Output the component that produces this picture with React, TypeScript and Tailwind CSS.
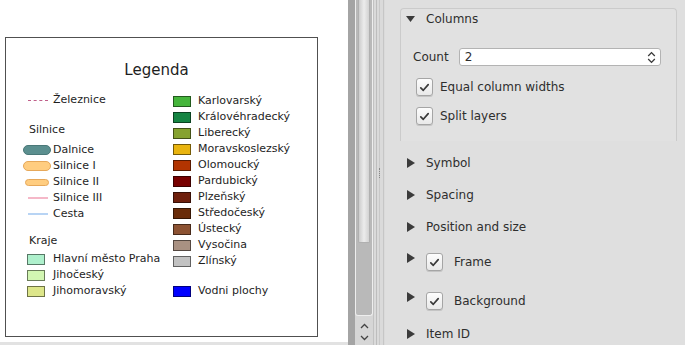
import React from "react";

type LegendItem = {
  label: string;
  kind: "rect" | "line" | "dash" | "pill" | "pillSmall";
  color: string;
  border?: string;
};

const leftTop: LegendItem[] = [{ label: "Železnice", kind: "dash", color: "#c0608a" }];

const roads: LegendItem[] = [
  { label: "Dalnice", kind: "pill", color: "#5b8f8f", border: "#4a7878" },
  { label: "Silnice I", kind: "pill", color: "#ffcd80", border: "#e6a85a" },
  { label: "Silnice II", kind: "pillSmall", color: "#ffcd80", border: "#e6a85a" },
  { label: "Silnice III", kind: "line", color: "#f5b8c8" },
  { label: "Cesta", kind: "line", color: "#b8d4f4" },
];

const regionsLeft: LegendItem[] = [
  { label: "Hlavní město Praha", kind: "rect", color: "#aef0cc" },
  { label: "Jihočeský", kind: "rect", color: "#d2f6b2" },
  { label: "Jihomoravský", kind: "rect", color: "#dde68a" },
];

const regionsRight: LegendItem[] = [
  { label: "Karlovarský", kind: "rect", color: "#45b53b" },
  { label: "Královéhradecký", kind: "rect", color: "#158442" },
  { label: "Liberecký", kind: "rect", color: "#86a22f" },
  { label: "Moravskoslezský", kind: "rect", color: "#e9b40f" },
  { label: "Olomoucký", kind: "rect", color: "#b23401" },
  { label: "Pardubický", kind: "rect", color: "#780000" },
  { label: "Plzeňský", kind: "rect", color: "#6e1f0c" },
  { label: "Středočeský", kind: "rect", color: "#6a2c09" },
  { label: "Ústecký", kind: "rect", color: "#8c5232" },
  { label: "Vysočina", kind: "rect", color: "#a99182" },
  { label: "Zlínský", kind: "rect", color: "#c2c2c2" },
];

// left column symbol slot is 28px wide, text follows after 2px
const LeftRow = ({ item }: { item: LegendItem }) => (
  <div className="flex h-4 items-center">
    <div className="flex w-[28px] items-center">
      {item.kind === "rect" && (
        <span className="ml-1 h-[11px] w-[18px] border border-black/50" style={{ background: item.color }} />
      )}
      {item.kind === "line" && <span className="ml-[5px] h-[2px] w-5" style={{ background: item.color }} />}
      {item.kind === "dash" && (
        <span className="ml-[5px] w-5 border-t-[1.5px] border-dashed" style={{ borderColor: item.color }} />
      )}
      {item.kind === "pill" && (
        <span className="h-[10px] w-[28px] rounded-full border" style={{ background: item.color, borderColor: item.border }} />
      )}
      {item.kind === "pillSmall" && (
        <span className="ml-[2px] h-[7px] w-6 rounded-full border" style={{ background: item.color, borderColor: item.border }} />
      )}
    </div>
    <span className="ml-[2px] whitespace-nowrap">{item.label}</span>
  </div>
);

const RightRow = ({ item }: { item: LegendItem }) => (
  <div className="flex h-4 items-center">
    <span className="h-[11px] w-[18px] border border-black/50" style={{ background: item.color }} />
    <span className="ml-[7px] whitespace-nowrap">{item.label}</span>
  </div>
);

const Check = () => (
  <span className="flex h-[18px] w-[17px] shrink-0 items-center justify-center rounded-[3px] border border-[#a5a5a5] bg-linear-to-b from-[#fdfdfd] to-[#e9e9e9] shadow-[0_1px_0_#c4c4c4]">
    <svg width="11" height="11" viewBox="0 0 11 11">
      <path d="M1.8 5.8 L4.3 8.3 L9.2 2.6" fill="none" stroke="#3a3a3a" strokeWidth="1.7" strokeLinecap="round" strokeLinejoin="round" />
    </svg>
  </span>
);

const ArrowRight = () => (
  <svg width="8" height="10" viewBox="0 0 8 10" className="shrink-0">
    <path d="M0 0 L8 5 L0 10 Z" fill="#3b3b3b" />
  </svg>
);

const Section = ({ label, h }: { label: string; h: string }) => (
  <div className={`flex shrink-0 items-center pl-[22px] ${h}`}>
    <ArrowRight />
    <span className="ml-[11px]">{label}</span>
  </div>
);

const CheckSection = ({ label, h }: { label: string; h: string }) => (
  <div className={`flex shrink-0 items-start pl-[22px] pt-[10px] ${h}`}>
    <ArrowRight />
    <div className="ml-[11px] flex items-center">
      <Check />
      <span className="ml-[11px]">{label}</span>
    </div>
  </div>
);

export default function App() {
  return (
    <div className="flex h-[345px] w-[685px] overflow-hidden bg-[#dfdfdf] font-['DejaVu_Sans',sans-serif]">
      {/* Canvas with legend */}
      <div className="flex h-full w-[348px] shrink-0 flex-col">
        <div className="flex-1 bg-white pl-[5px] pt-[37px]">
          <div className="h-[300px] w-[313px] border border-[#505050] pt-[23px] text-[11px] text-[#1e1e1e]">
            <div className="h-[18px] pr-[10px] text-center text-[15px] leading-[18px]">Legenda</div>
            <div className="mt-[13px] flex">
              <div className="w-[167px] pl-[17px]">
                {leftTop.map((i) => (
                  <LeftRow key={i.label} item={i} />
                ))}
                <div className="ml-[6px] mt-[14px] flex h-4 items-center">Silnice</div>
                <div className="mt-[4px]">
                  {roads.map((i) => (
                    <LeftRow key={i.label} item={i} />
                  ))}
                </div>
                <div className="ml-[6px] mt-[11px] flex h-4 items-center">Kraje</div>
                <div className="mt-[2px]">
                  {regionsLeft.map((i) => (
                    <LeftRow key={i.label} item={i} />
                  ))}
                </div>
              </div>
              <div className="pt-[1px]">
                {regionsRight.map((i) => (
                  <RightRow key={i.label} item={i} />
                ))}
                <div className="mt-[14px]">
                  <RightRow item={{ label: "Vodni plochy", kind: "rect", color: "#0000ff" }} />
                </div>
              </div>
            </div>
          </div>
        </div>
        <div className="h-[3px] shrink-0 bg-[#e2e2e2]" />
      </div>

      {/* Vertical scrollbar */}
      <div className="flex h-full shrink-0">
        <div className="w-[7px] bg-[#a4a4a4]" />
        <div className="flex w-[18px] flex-col bg-[#d6d6d6]">
          <div className="flex h-[316px] shrink-0 flex-col rounded-b-[3px] border-x border-b border-[#eeeeee] bg-[#b9b9b9] pl-[2px]">
            <div className="h-[243px] w-[12px] shrink-0 rounded-b-[2px] border border-t-0 border-[#b0b0b0] bg-linear-to-r from-[#cdcdcd] via-[#ececec] to-[#d2d2d2]" />
          </div>
          <div className="flex flex-1 flex-col items-center justify-center gap-[6px] pt-[2px]">
            <svg width="9" height="6" viewBox="0 0 9 6">
              <path d="M1 5 L4.5 1.5 L8 5" fill="none" stroke="#444" strokeWidth="1.3" />
            </svg>
            <svg width="9" height="6" viewBox="0 0 9 6">
              <path d="M1 1 L4.5 4.5 L8 1" fill="none" stroke="#444" strokeWidth="1.3" />
            </svg>
          </div>
        </div>
        {/* splitter */}
        <div className="flex w-[12px] border-l border-[#c2c2c2] bg-[#dadada]">
          <div className="ml-[2px] w-px bg-[#bdbdbd]" />
          <div className="ml-[2px] flex w-px flex-col items-center justify-center bg-[#c8c8c8]">
            <span className="h-[10px] w-px border-l border-dotted border-[#888]" />
          </div>
          <div className="ml-[3px] w-px bg-[#c6c6c6]" />
        </div>
      </div>

      {/* Properties panel */}
      <div className="flex h-full w-[300px] flex-col bg-[#dfdfdf] text-[12px] text-[#2e2e2e]">
        <div className="ml-[15px] mt-[8px] h-[133px] w-[277px] shrink-0 rounded-t-[4px] border border-b-0 border-[#cbcbcb] bg-[#e1e1e1]">
          <div className="flex h-[19px] items-center pl-[5px]">
            <svg width="9" height="6" viewBox="0 0 9 6" className="shrink-0">
              <path d="M0 0 L9 0 L4.5 6 Z" fill="#3b3b3b" />
            </svg>
            <span className="ml-[11px]">Columns</span>
          </div>
          <div className="mt-[20px] flex h-[18px] items-center pl-[12px]">
            <span>Count</span>
            <div className="ml-[10px] flex h-[18px] w-[202px] items-center justify-between rounded-[3px] border border-[#b3b3b3] bg-white pl-[5px] pr-[4px]">
              <span>2</span>
              <svg width="9" height="13" viewBox="0 0 9 13">
                <path d="M1.2 5 L4.5 1.6 L7.8 5 M1.2 8 L4.5 11.4 L7.8 8" fill="none" stroke="#3a3a3a" strokeWidth="1.3" />
              </svg>
            </div>
          </div>
          <div className="mt-[12px] flex h-[18px] items-center pl-[15px]">
            <Check />
            <span className="ml-[7px]">Equal column widths</span>
          </div>
          <div className="mt-[11px] flex h-[18px] items-center pl-[15px]">
            <Check />
            <span className="ml-[7px]">Split layers</span>
          </div>
        </div>
        <div className="mt-[6px] flex shrink-0 flex-col">
          <Section label="Symbol" h="h-[32px]" />
          <Section label="Spacing" h="h-[31px]" />
          <Section label="Position and size" h="h-[33px]" />
          <CheckSection label="Frame" h="h-[39px]" />
          <CheckSection label="Background" h="h-[38px]" />
          <Section label="Item ID" h="h-[28px]" />
        </div>
      </div>
    </div>
  );
}
